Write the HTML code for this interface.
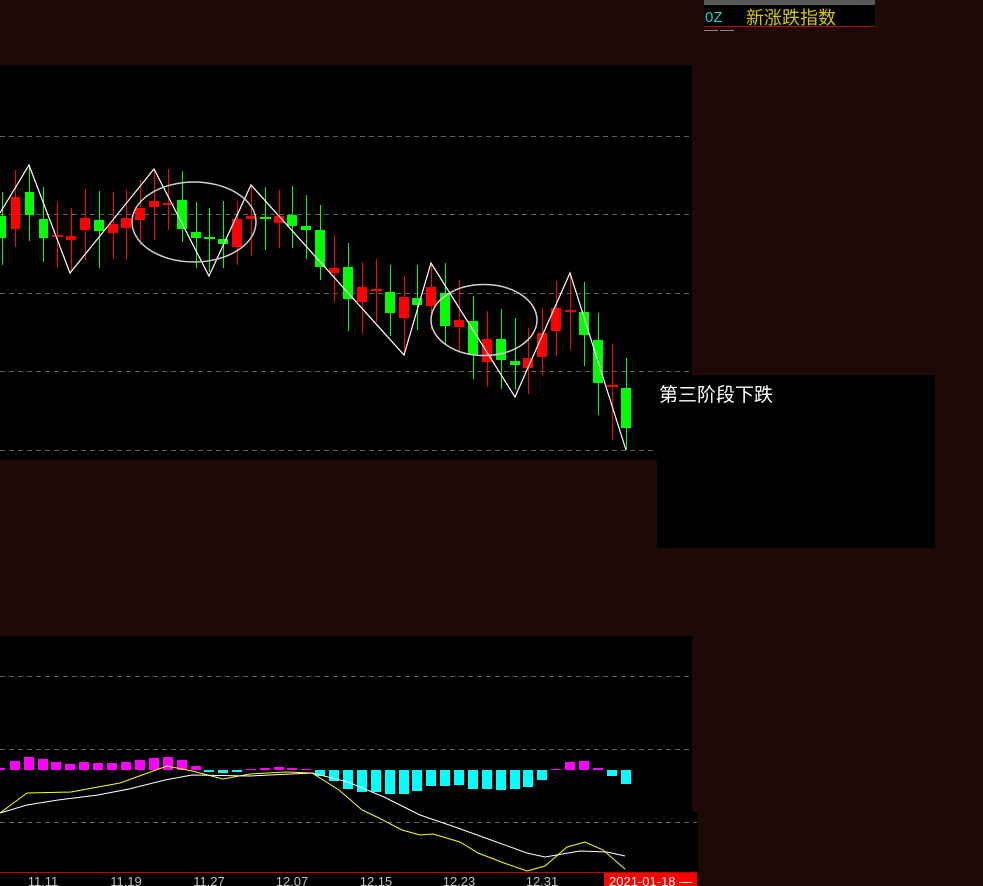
<!DOCTYPE html>
<html><head><meta charset="utf-8">
<style>
html,body{margin:0;padding:0;background:#1c0908;width:983px;height:886px;overflow:hidden}
svg{display:block}
text{font-family:"Liberation Sans","Noto Sans CJK SC",sans-serif}
</style></head><body>
<svg width="983" height="886" viewBox="0 0 983 886" xmlns="http://www.w3.org/2000/svg">
<rect width="983" height="886" fill="#1c0908"/>
<!-- header top right -->
<rect x="704" y="0" width="171" height="5" fill="#5a5a5a"/>
<rect x="704" y="5" width="171" height="22" fill="#000"/>
<rect x="704" y="26" width="171" height="1" fill="#c00000"/>
<text x="705" y="22" font-size="15" fill="#20d0d0">0Z</text>
<text x="746" y="24" font-size="18" fill="#d8c800" font-family="'Noto Sans CJK SC',sans-serif">新涨跌指数</text>
<rect x="704" y="30" width="14" height="1" fill="#888"/><rect x="720" y="30" width="14" height="1" fill="#888"/>
<!-- main chart -->
<rect x="0" y="65" width="692" height="395" fill="#000"/>
<g stroke="#606060" stroke-dasharray="5,4" stroke-width="1">
<line x1="0" y1="136.5" x2="692" y2="136.5"/><line x1="0" y1="214.5" x2="692" y2="214.5"/>
<line x1="0" y1="293.5" x2="692" y2="293.5"/><line x1="0" y1="371.5" x2="692" y2="371.5"/>
<line x1="0" y1="450.5" x2="692" y2="450.5"/>
</g>
<g id="candles">
<!-- x, bodyTop, bodyBot, wickTop, wickBot, color -->
<g fill="#00ff00"><rect x="2" y="192" width="1" height="73"/><rect x="-2" y="216" width="8" height="22"/></g>
<g fill="#ff0000"><rect x="15" y="170" width="1" height="77"/><rect x="11" y="197" width="9" height="32"/></g>
<g fill="#00ff00"><rect x="29" y="165" width="1" height="76"/><rect x="25" y="192" width="9" height="23"/></g>
<g fill="#00ff00"><rect x="43" y="187" width="1" height="75"/><rect x="39" y="219" width="9" height="19"/></g>
<g fill="#ff0000"><rect x="57" y="202" width="1" height="66"/><rect x="52" y="235" width="11" height="2"/></g>
<g fill="#ff0000"><rect x="71" y="208" width="1" height="64"/><rect x="66" y="236" width="10" height="4"/></g>
<g fill="#ff0000"><rect x="85" y="189" width="1" height="71"/><rect x="80" y="218" width="10" height="12"/></g>
<g fill="#00ff00"><rect x="99" y="191" width="1" height="77"/><rect x="94" y="220" width="10" height="11"/></g>
<g fill="#ff0000"><rect x="113" y="192" width="1" height="67"/><rect x="108" y="224" width="10" height="9"/></g>
<g fill="#ff0000"><rect x="126" y="190" width="1" height="70"/><rect x="121" y="218" width="10" height="10"/></g>
<g fill="#ff0000"><rect x="140" y="180" width="1" height="65"/><rect x="135" y="208" width="10" height="12"/></g>
<g fill="#ff0000"><rect x="154" y="170" width="1" height="70"/><rect x="149" y="201" width="10" height="6"/></g>
<g fill="#ff0000"><rect x="168" y="169" width="1" height="61"/><rect x="163" y="203" width="11" height="2"/></g>
<g fill="#00ff00"><rect x="182" y="171" width="1" height="71"/><rect x="177" y="200" width="10" height="29"/></g>
<g fill="#00ff00"><rect x="196" y="202" width="1" height="66"/><rect x="191" y="232" width="10" height="6"/></g>
<g fill="#00ff00"><rect x="209" y="208" width="1" height="64"/><rect x="204" y="237" width="11" height="2"/></g>
<g fill="#00ff00"><rect x="223" y="201" width="1" height="67"/><rect x="218" y="239" width="10" height="5"/></g>
<g fill="#ff0000"><rect x="237" y="201" width="1" height="64"/><rect x="232" y="219" width="10" height="28"/></g>
<g fill="#ff0000"><rect x="251" y="185" width="1" height="71"/><rect x="246" y="216" width="10" height="3"/></g>
<g fill="#00ff00"><rect x="265" y="187" width="1" height="63"/><rect x="260" y="217" width="11" height="2"/></g>
<g fill="#ff0000"><rect x="279" y="190" width="1" height="58"/><rect x="274" y="216" width="10" height="7"/></g>
<g fill="#00ff00"><rect x="292" y="186" width="1" height="62"/><rect x="287" y="215" width="10" height="11"/></g>
<g fill="#00ff00"><rect x="306" y="195" width="1" height="64"/><rect x="301" y="226" width="10" height="4"/></g>
<g fill="#00ff00"><rect x="320" y="205" width="1" height="75"/><rect x="315" y="230" width="10" height="37"/></g>
<g fill="#ff0000"><rect x="334" y="235" width="1" height="67"/><rect x="329" y="268" width="10" height="5"/></g>
<g fill="#00ff00"><rect x="348" y="243" width="1" height="88"/><rect x="343" y="267" width="10" height="32"/></g>
<g fill="#ff0000"><rect x="362" y="262" width="1" height="72"/><rect x="357" y="287" width="10" height="15"/></g>
<g fill="#ff0000"><rect x="376" y="259" width="1" height="63"/><rect x="371" y="289" width="11" height="2"/></g>
<g fill="#00ff00"><rect x="390" y="265" width="1" height="71"/><rect x="385" y="292" width="10" height="21"/></g>
<g fill="#ff0000"><rect x="404" y="276" width="1" height="79"/><rect x="399" y="297" width="10" height="21"/></g>
<g fill="#00ff00"><rect x="417" y="265" width="1" height="65"/><rect x="412" y="298" width="10" height="7"/></g>
<g fill="#ff0000"><rect x="431" y="263" width="1" height="67"/><rect x="426" y="287" width="10" height="19"/></g>
<g fill="#00ff00"><rect x="445" y="263" width="1" height="82"/><rect x="440" y="293" width="10" height="33"/></g>
<g fill="#ff0000"><rect x="459" y="280" width="1" height="73"/><rect x="454" y="320" width="10" height="7"/></g>
<g fill="#00ff00"><rect x="473" y="296" width="1" height="83"/><rect x="468" y="321" width="10" height="34"/></g>
<g fill="#ff0000"><rect x="487" y="311" width="1" height="76"/><rect x="482" y="339" width="10" height="23"/></g>
<g fill="#00ff00"><rect x="501" y="309" width="1" height="80"/><rect x="496" y="339" width="10" height="21"/></g>
<g fill="#00ff00"><rect x="515" y="318" width="1" height="72"/><rect x="510" y="361" width="10" height="4"/></g>
<g fill="#ff0000"><rect x="528" y="328" width="1" height="66"/><rect x="523" y="358" width="10" height="10"/></g>
<g fill="#ff0000"><rect x="542" y="308" width="1" height="67"/><rect x="537" y="333" width="10" height="24"/></g>
<g fill="#ff0000"><rect x="556" y="281" width="1" height="75"/><rect x="551" y="308" width="10" height="23"/></g>
<g fill="#ff0000"><rect x="570" y="273" width="1" height="77"/><rect x="565" y="310" width="11" height="2"/></g>
<g fill="#00ff00"><rect x="584" y="282" width="1" height="84"/><rect x="579" y="312" width="10" height="23"/></g>
<g fill="#00ff00"><rect x="598" y="313" width="1" height="102"/><rect x="593" y="340" width="10" height="43"/></g>
<g fill="#ff0000"><rect x="612" y="344" width="1" height="96"/><rect x="607" y="385" width="11" height="2"/></g>
<g fill="#00ff00"><rect x="626" y="358" width="1" height="92"/><rect x="621" y="388" width="10" height="40"/></g>
</g>
<polyline points="0,213 29,165 70,273 154,169 209,276 251,185 404,355 431,263 515,397 570,273 626,450" fill="none" stroke="#fff" stroke-width="1.2"/>
<ellipse cx="194" cy="222" rx="62" ry="40" fill="none" stroke="#d0d0d0" stroke-width="1.5"/>
<ellipse cx="484" cy="320" rx="53" ry="35.5" fill="none" stroke="#d0d0d0" stroke-width="1.5"/>
<!-- annotation box -->
<rect x="657" y="375" width="278" height="173" fill="#000"/>
<text x="659" y="401" font-size="19" fill="#fff" font-family="'Noto Sans CJK SC',sans-serif">第三阶段下跌</text>
<!-- lower chart -->
<rect x="0" y="636" width="692" height="250" fill="#000"/>
<rect x="692" y="812" width="6" height="74" fill="#000"/>
<g stroke="#606060" stroke-dasharray="5,4" stroke-width="1">
<line x1="0" y1="676.5" x2="692" y2="676.5"/><line x1="0" y1="749.5" x2="692" y2="749.5"/>
<line x1="0" y1="822.5" x2="697" y2="822.5"/>
</g>
<g fill="#ff00ff">
<rect x="0" y="768" width="5" height="2"/>
<rect x="10" y="761" width="10" height="9"/><rect x="24" y="757" width="10" height="13"/>
<rect x="38" y="759" width="10" height="11"/><rect x="51" y="762" width="10" height="8"/>
<rect x="65" y="764" width="10" height="6"/><rect x="79" y="762" width="10" height="8"/>
<rect x="93" y="763" width="10" height="7"/><rect x="107" y="763" width="10" height="7"/>
<rect x="121" y="762" width="10" height="8"/><rect x="135" y="760" width="10" height="10"/>
<rect x="149" y="758" width="10" height="12"/><rect x="163" y="757" width="10" height="13"/>
<rect x="177" y="760" width="10" height="10"/><rect x="191" y="766" width="10" height="4"/>
<rect x="246" y="769" width="10" height="1"/><rect x="260" y="768" width="10" height="2"/>
<rect x="274" y="767" width="10" height="3"/><rect x="287" y="768" width="10" height="2"/>
<rect x="301" y="769" width="10" height="1"/>
<rect x="551" y="769" width="10" height="1"/><rect x="565" y="762" width="10" height="8"/>
<rect x="579" y="761" width="10" height="9"/><rect x="593" y="768" width="10" height="2"/>
</g>
<g fill="#00ffff">
<rect x="204" y="770" width="10" height="2"/><rect x="218" y="770" width="10" height="3"/>
<rect x="232" y="770" width="10" height="2"/>
<rect x="315" y="770" width="10" height="6"/><rect x="329" y="770" width="10" height="11"/>
<rect x="343" y="770" width="10" height="19"/><rect x="357" y="770" width="10" height="22"/>
<rect x="371" y="770" width="10" height="22"/><rect x="385" y="770" width="10" height="24"/>
<rect x="399" y="770" width="10" height="24"/><rect x="412" y="770" width="10" height="21"/>
<rect x="426" y="770" width="10" height="16"/><rect x="440" y="770" width="10" height="16"/>
<rect x="454" y="770" width="10" height="15"/><rect x="468" y="770" width="10" height="19"/>
<rect x="482" y="770" width="10" height="19"/><rect x="496" y="770" width="10" height="20"/>
<rect x="510" y="770" width="10" height="19"/><rect x="523" y="770" width="10" height="17"/>
<rect x="537" y="770" width="10" height="10"/>
<rect x="607" y="770" width="10" height="6"/><rect x="621" y="770" width="10" height="14"/>
</g>
<polyline fill="none" stroke="#ffff00" stroke-width="1" points="0,813 27,793 71,792 120,783 167,766 192,771 223,779 250,774 286,772 312,773 339,790 362,810 379,818 402,830 420,835 433,834 460,842 478,853 504,863 527,871 545,866 567,847 585,842 603,850 625,869"/>
<polyline fill="none" stroke="#ffffff" stroke-width="1" points="0,813 27,805 58,800 98,795 129,789 165,780 192,775 250,776 312,773 348,782 384,797 420,815 455,827 491,840 527,853 545,857 580,851 607,852 625,856"/>
<!-- axis -->
<rect x="0" y="872" width="697" height="1" fill="#c00000"/>
<rect x="0" y="873" width="697" height="13" fill="#000"/>
<g font-size="13" fill="#c0c0c0" text-anchor="middle">
<text x="43" y="886">11.11</text><text x="126" y="886">11.19</text><text x="209" y="886">11.27</text>
<text x="292" y="886">12.07</text><text x="376" y="886">12.15</text><text x="459" y="886">12.23</text>
<text x="542" y="886">12.31</text>
</g>
<rect x="604" y="873" width="93" height="13" fill="#ff0000"/>
<text x="609" y="886" font-size="13" fill="#fff">2021-01-18 —</text>
</svg>
</body></html>
